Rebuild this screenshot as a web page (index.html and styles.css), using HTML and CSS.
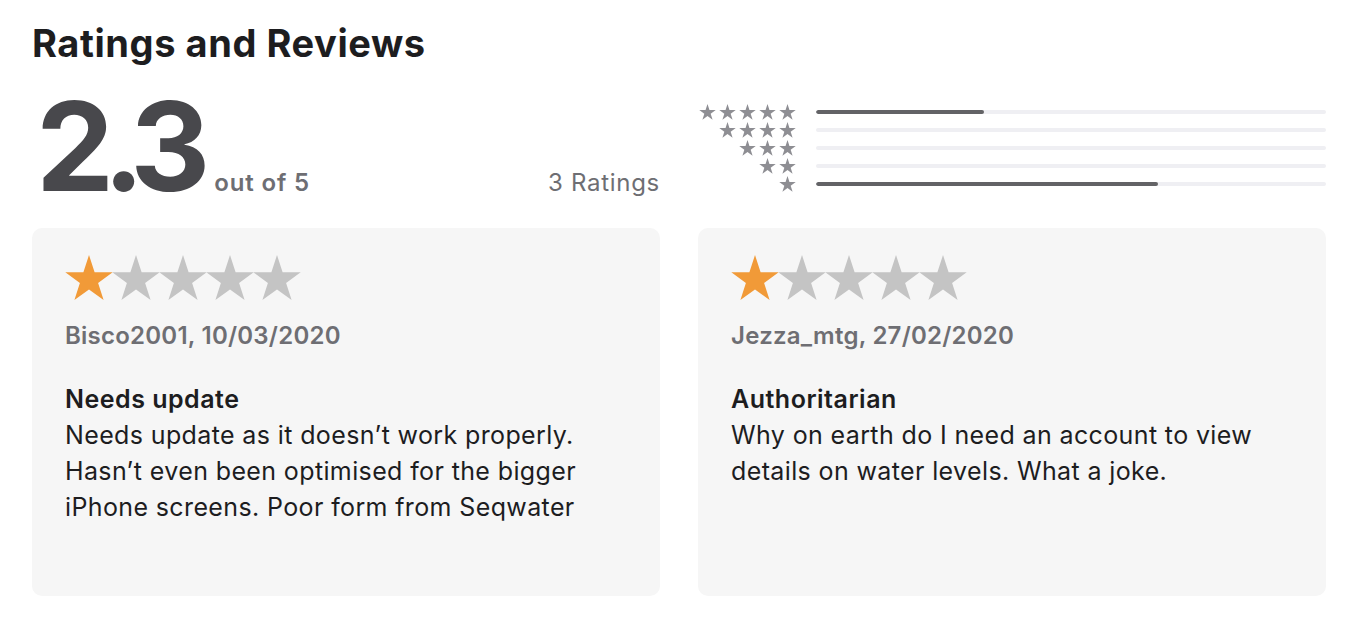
FILE: index.html
```html
<!DOCTYPE html>
<html lang="en">
<head>
<meta charset="utf-8">
<title>Ratings and Reviews</title>
<link rel="stylesheet" href="styles.css">
</head>
<body>
<svg class="defs" width="0" height="0" aria-hidden="true">
  <defs>
    <polygon id="star" points="24,0 29.6,17.2 47.7,17.2 33.1,27.9 38.6,45.1 24,34.4 9.4,45.1 14.9,27.9 0.3,17.2 18.4,17.2"/>
  </defs>
</svg>
<main class="page">
  <h1 class="title">Ratings and Reviews</h1>
  <section class="summary">
    <div class="score-block">
      <span class="score">2.3</span>
      <span class="outof">out of 5</span>
      <span class="count">3 Ratings</span>
    </div>
    <div class="histogram">
      <div class="hrow">
        <div class="hstars">
          <svg viewBox="0 0 48 46"><use href="#star"/></svg><svg viewBox="0 0 48 46"><use href="#star"/></svg><svg viewBox="0 0 48 46"><use href="#star"/></svg><svg viewBox="0 0 48 46"><use href="#star"/></svg><svg viewBox="0 0 48 46"><use href="#star"/></svg>
        </div>
        <div class="track"><div class="fill" style="width:33%"></div></div>
      </div>
      <div class="hrow">
        <div class="hstars">
          <svg viewBox="0 0 48 46"><use href="#star"/></svg><svg viewBox="0 0 48 46"><use href="#star"/></svg><svg viewBox="0 0 48 46"><use href="#star"/></svg><svg viewBox="0 0 48 46"><use href="#star"/></svg>
        </div>
        <div class="track"><div class="fill" style="width:0%"></div></div>
      </div>
      <div class="hrow">
        <div class="hstars">
          <svg viewBox="0 0 48 46"><use href="#star"/></svg><svg viewBox="0 0 48 46"><use href="#star"/></svg><svg viewBox="0 0 48 46"><use href="#star"/></svg>
        </div>
        <div class="track"><div class="fill" style="width:0%"></div></div>
      </div>
      <div class="hrow">
        <div class="hstars">
          <svg viewBox="0 0 48 46"><use href="#star"/></svg><svg viewBox="0 0 48 46"><use href="#star"/></svg>
        </div>
        <div class="track"><div class="fill" style="width:0%"></div></div>
      </div>
      <div class="hrow">
        <div class="hstars">
          <svg viewBox="0 0 48 46"><use href="#star"/></svg>
        </div>
        <div class="track"><div class="fill" style="width:67%"></div></div>
      </div>
    </div>
  </section>
  <section class="reviews">
    <article class="card">
      <div class="rating">
        <svg class="on" viewBox="0 0 48 46"><use href="#star"/></svg><svg viewBox="0 0 48 46"><use href="#star"/></svg><svg viewBox="0 0 48 46"><use href="#star"/></svg><svg viewBox="0 0 48 46"><use href="#star"/></svg><svg viewBox="0 0 48 46"><use href="#star"/></svg>
      </div>
      <p class="author">Bisco2001, 10/03/2020</p>
      <h2 class="rtitle">Needs update</h2>
      <p class="body">Needs update as it doesn’t work properly. Hasn’t even been optimised for the bigger iPhone screens. Poor form from Seqwater</p>
    </article>
    <article class="card">
      <div class="rating">
        <svg class="on" viewBox="0 0 48 46"><use href="#star"/></svg><svg viewBox="0 0 48 46"><use href="#star"/></svg><svg viewBox="0 0 48 46"><use href="#star"/></svg><svg viewBox="0 0 48 46"><use href="#star"/></svg><svg viewBox="0 0 48 46"><use href="#star"/></svg>
      </div>
      <p class="author">Jezza_mtg, 27/02/2020</p>
      <h2 class="rtitle">Authoritarian</h2>
      <p class="body">Why on earth do I need an account to view details on water levels. What a joke.</p>
    </article>
  </section>
</main>
</body>
</html>
```

FILE: styles.css
```css
* { box-sizing: border-box; }
html, body { margin: 0; padding: 0; background: #fff; }
body {
  font-family: Inter, "Liberation Sans", sans-serif;
  color: #1d1d1f;
}
.defs { position: absolute; width: 0; height: 0; }
.page {
  padding: 21px 28px 0 32px;
}
.title {
  margin: 0;
  font-size: 38px;
  line-height: 44px;
  font-weight: 700;
  letter-spacing: 0.015em;
  color: #1d1d1f;
}
.summary {
  display: grid;
  grid-template-columns: 1fr 1fr;
  column-gap: 38px;
  margin-top: 19px;
  height: 124px;
}
.score-block {
  display: flex;
  align-items: baseline;
}
.score {
  font-size: 124px;
  line-height: 124px;
  font-weight: 700;
  color: #48484c;
  letter-spacing: -0.09em;
  margin-left: 4px;
}
.outof {
  margin-left: 15px;
  font-size: 24px;
  font-weight: 600;
  letter-spacing: 0.035em;
  color: #6e6e73;
}
.count {
  margin-left: auto;
  font-size: 24px;
  font-weight: 400;
  letter-spacing: 0.03em;
  color: #6e6e73;
}
.histogram {
  padding-top: 19px;
  display: flex;
  flex-direction: column;
}
.hrow {
  display: flex;
  align-items: center;
  height: 18px;
}
.hstars {
  width: 98px;
  display: flex;
  justify-content: flex-end;
  gap: 3px;
}
.hstars svg {
  width: 17px;
  height: 16px;
  fill: #8e8e93;
  display: block;
}
.track {
  margin-left: 20px;
  flex: 1;
  height: 4px;
  border-radius: 2px;
  background: #efeff3;
  overflow: hidden;
}
.fill {
  height: 100%;
  background: #636366;
  border-radius: 2px;
}
.reviews {
  display: grid;
  grid-template-columns: 1fr 1fr;
  column-gap: 38px;
  margin-top: 20px;
}
.card {
  background: #f6f6f6;
  border-radius: 10px;
  height: 368px;
  padding: 27px 33px 0 33px;
}
.rating {
  display: flex;
  height: 46px;
}
.rating svg {
  width: 48px;
  height: 46px;
  fill: #c4c4c4;
  display: block;
  margin-right: -1px;
}
.rating svg.on { fill: #f19a38; }
.author {
  margin: 21px 0 0;
  font-size: 24px;
  line-height: 28px;
  font-weight: 600;
  letter-spacing: 0.01em;
  color: #6e6e73;
}
.rtitle {
  margin: 31px 0 0;
  font-size: 25px;
  line-height: 36px;
  font-weight: 600;
  letter-spacing: 0.02em;
  color: #1d1d1f;
}
.body {
  margin: 0;
  font-size: 25px;
  line-height: 36px;
  font-weight: 400;
  letter-spacing: 0.015em;
  color: #1d1d1f;
}
```
